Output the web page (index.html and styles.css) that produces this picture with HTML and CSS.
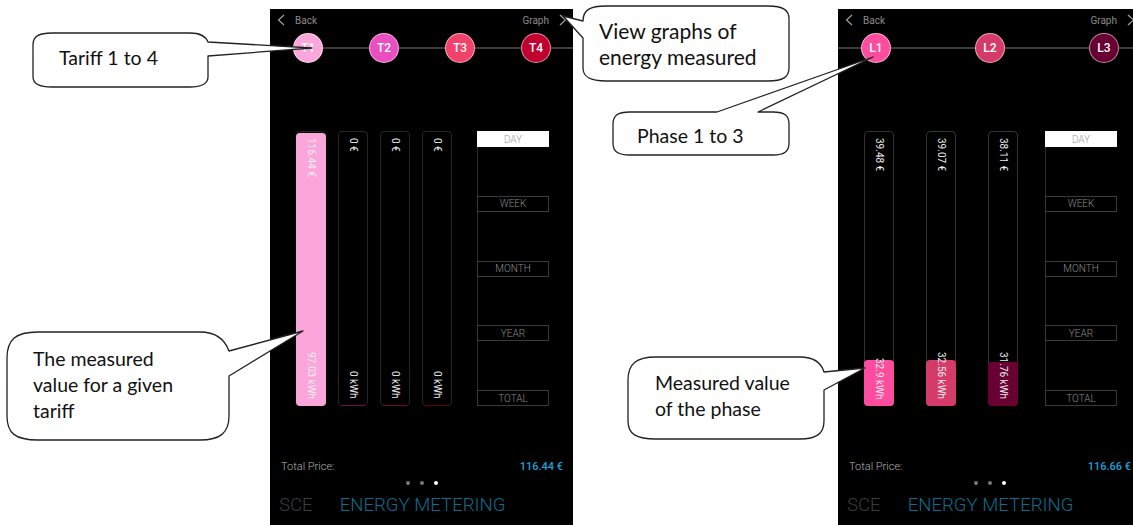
FILE: index.html
```html
<!DOCTYPE html>
<html lang="en">
<head>
  <meta charset="UTF-8" />
  <title>Energy Metering</title>
  <link rel="stylesheet" href="styles.css">
</head>
<body>
  <div class="page">
    <div class="phones">
      <!-- tariffs screen -->
      <div class="phone">
        <div class="topbar">
          <span class="nav"><svg width="8" height="12" viewBox="0 0 8 12"><polyline points="7,1 1.5,6 7,11" /></svg>Back</span>
          <span class="nav">Graph<svg width="8" height="12" viewBox="0 0 8 12"><polyline points="1,1 6.5,6 1,11" /></svg></span>
        </div>
        <div class="tabs tabs-4">
          <span class="tab t1">T1</span>
          <span class="tab t2">T2</span>
          <span class="tab t3">T3</span>
          <span class="tab t4">T4</span>
        </div>
        <div class="chart">
          <div class="bars bars-4">
            <div class="bar"><span class="lbl top">116.44 €</span><div class="fill t1" style="height:100%"></div><span class="lbl bottom">97.03 kWh</span></div>
            <div class="bar"><span class="lbl top">0 €</span><div class="fill empty-t2"></div><span class="lbl bottom">0 kWh</span></div>
            <div class="bar"><span class="lbl top">0 €</span><div class="fill empty-t3"></div><span class="lbl bottom">0 kWh</span></div>
            <div class="bar"><span class="lbl top">0 €</span><div class="fill empty-t4"></div><span class="lbl bottom">0 kWh</span></div>
          </div>
          <div class="periods">
            <span class="period active">DAY</span>
            <span class="period">WEEK</span>
            <span class="period">MONTH</span>
            <span class="period">YEAR</span>
            <span class="period">TOTAL</span>
          </div>
        </div>
        <div class="total"><span>Total Price:</span><span class="price">116.44 €</span></div>
        <div class="dots"><i></i><i></i><i class="on"></i></div>
        <div class="title"><span class="sce">SCE</span><span class="name">ENERGY METERING</span></div>
      </div>

      <!-- phases screen -->
      <div class="phone">
        <div class="topbar">
          <span class="nav"><svg width="8" height="12" viewBox="0 0 8 12"><polyline points="7,1 1.5,6 7,11" /></svg>Back</span>
          <span class="nav">Graph<svg width="8" height="12" viewBox="0 0 8 12"><polyline points="1,1 6.5,6 1,11" /></svg></span>
        </div>
        <div class="tabs tabs-3">
          <span class="tab l1">L1</span>
          <span class="tab l2">L2</span>
          <span class="tab l3">L3</span>
        </div>
        <div class="chart">
          <div class="bars bars-3">
            <div class="bar lit"><span class="lbl top">39.48 €</span><div class="fill l1" style="height:17%"></div><span class="lbl bottom">32.9 kWh</span></div>
            <div class="bar lit"><span class="lbl top">39.07 €</span><div class="fill l2" style="height:17%"></div><span class="lbl bottom">32.56 kWh</span></div>
            <div class="bar lit"><span class="lbl top">38.11 €</span><div class="fill l3" style="height:16%"></div><span class="lbl bottom">31.76 kWh</span></div>
          </div>
          <div class="periods">
            <span class="period active">DAY</span>
            <span class="period">WEEK</span>
            <span class="period">MONTH</span>
            <span class="period">YEAR</span>
            <span class="period">TOTAL</span>
          </div>
        </div>
        <div class="total"><span>Total Price:</span><span class="price">116.66 €</span></div>
        <div class="dots"><i></i><i></i><i class="on"></i></div>
        <div class="title"><span class="sce">SCE</span><span class="name">ENERGY METERING</span></div>
      </div>
    </div>

    <!-- annotation bubbles -->
    <svg class="callouts" width="1133" height="525" viewBox="0 0 1133 525">
      <path d="M33,45 C33,36 39,33 52,33 H190 C200,33 206,37 208,42 L312,48 L208,56 V77 C208,84 200,87 190,87 H52 C39,87 33,84 33,77 Z" />
      <path d="M583,21 L563,16 L583,38 V68 C583,77 590,81 606,81 H768 C783,81 789,77 789,68 V19 C789,10 783,6 768,6 H606 C590,6 583,10 583,21 Z" />
      <path d="M630,112 H717 L873,57 L758,112 H773 C785,112 789,116 789,124 V143 C789,151 785,155 773,155 H630 C617,155 613,151 613,143 V124 C613,116 617,112 630,112 Z" />
      <path d="M7,358 C7,340 15,332 38,332 H200 C216,332 225,340 229,351 L303,331 L229,376 V416 C229,433 220,440 200,440 H38 C15,440 7,433 7,416 Z" />
      <path d="M628,380 C628,364 636,357 656,357 H800 C814,357 821,362 824,372 L865,368 L824,390 V421 C824,434 816,439 800,439 H656 C636,439 628,434 628,421 Z" />
    </svg>
    <div class="note n1">Tariff 1 to 4</div>
    <div class="note n2">View graphs of<br>energy measured</div>
    <div class="note n3">Phase 1 to 3</div>
    <div class="note n4">The measured<br>value for a given<br>tariff</div>
    <div class="note n5">Measured value<br>of the phase</div>
  </div>
</body>
</html>
```

FILE: styles.css
```css
body { margin: 0; background: #fff; overflow: hidden; }
.page { position: relative; width: 1133px; height: 525px; overflow: hidden; }

.phones { display: flex; gap: 265px; padding: 9px 0 0 270px; }
.phone { flex: none; width: 303px; height: 516px; background: #000; display: flex; flex-direction: column; font-family: Roboto, sans-serif; color: #fff; }

.topbar { height: 22px; display: flex; justify-content: space-between; align-items: center; padding: 0 6px 0 7px; font-size: 10px; color: #8c8c8c; }
.nav { display: flex; align-items: center; gap: 10px; }
.nav svg polyline { fill: none; stroke: #a0a0a0; stroke-width: 1.2; }

.tabs { position: relative; height: 30px; margin-top: 2px; display: flex; padding-left: 23px; }
.tabs::before { content: ""; position: absolute; left: 0; right: 0; top: 14px; height: 2px; background: #3c3c3c; }
.tabs-4 { gap: 46px; }
.tabs-3 { gap: 84px; }
.tab { position: relative; width: 30px; height: 30px; box-sizing: border-box; border-radius: 50%; border: 1px solid rgba(255,255,255,0.55); display: flex; align-items: center; justify-content: center; font-size: 12px; font-weight: 500; }
.t1 { background: #fba6da; }
.t2 { background: #ea4fc1; }
.t3 { background: #f1426b; }
.t4 { background: #c1002f; }
.l1 { background: #fe4d9f; }
.l2 { background: #d53b69; }
.l3 { background: #680031; }

.chart { display: flex; height: 275px; margin-top: 68px; padding: 0 24px 0 26px; }
.bars { display: flex; }
.bars-4 { gap: 12px; }
.bars-3 { gap: 32px; }
.bar { position: relative; width: 30px; box-sizing: border-box; border: 1px solid #262626; border-radius: 4px; display: flex; flex-direction: column; justify-content: flex-end; }
.bar.lit { border-color: #333; }
.fill { margin: 0 -1px -1px; border-radius: 4px; }
.empty-t2, .empty-t3, .empty-t4 { height: 1px; border-radius: 0; margin: 0 2px -1px; }
.empty-t2 { background: #6a1050; }
.empty-t3 { background: #6a1028; }
.empty-t4 { background: #5a0018; }
.lbl { position: absolute; left: 50%; transform: translateX(-50%); writing-mode: vertical-rl; font-size: 10px; line-height: 12px; color: #eee; white-space: nowrap; }
.lbl.top { top: 6px; }
.lbl.bottom { bottom: 6px; }

.periods { margin-left: auto; width: 71px; border-left: 1px solid #2c2c2c; display: flex; flex-direction: column; justify-content: space-between; }
.period { height: 16px; margin-left: -1px; box-sizing: border-box; border: 1px solid #3a3a3a; display: flex; align-items: center; justify-content: center; font-size: 10px; font-weight: 300; color: #8c8c8c; }
.period.active { background: #fff; border-color: #fff; color: #9a9a9a; }

.total { margin-top: 52px; height: 16px; display: flex; justify-content: space-between; align-items: center; padding: 0 10px 0 11px; font-size: 11px; font-weight: 300; color: #b0b0b0; }
.price { color: #1ea2d9; font-weight: 500; }
.dots { margin-top: 7px; display: flex; justify-content: center; gap: 10px; }
.dots i { width: 4px; height: 4px; border-radius: 50%; background: #777; }
.dots i.on { background: #fff; }
.title { margin-top: 9px; display: flex; gap: 27px; padding-left: 9px; font-size: 18.6px; line-height: 22px; font-weight: 300; }
.sce { color: #3c3c3c; }
.name { color: #0e6b8c; }

.callouts { position: absolute; left: 0; top: 0; pointer-events: none; }
.callouts path { fill: #fff; stroke: #222; stroke-width: 1.3; stroke-linejoin: round; }
.note { position: absolute; font-family: Lato, "Liberation Sans", sans-serif; font-size: 19.5px; line-height: 26px; color: #111; white-space: nowrap; }
.n1 { left: 59px; top: 45px; }
.n2 { left: 599px; top: 18px; font-size: 21px; }
.n3 { left: 637px; top: 123px; }
.n4 { left: 33px; top: 346px; }
.n5 { left: 655px; top: 370px; }
```
